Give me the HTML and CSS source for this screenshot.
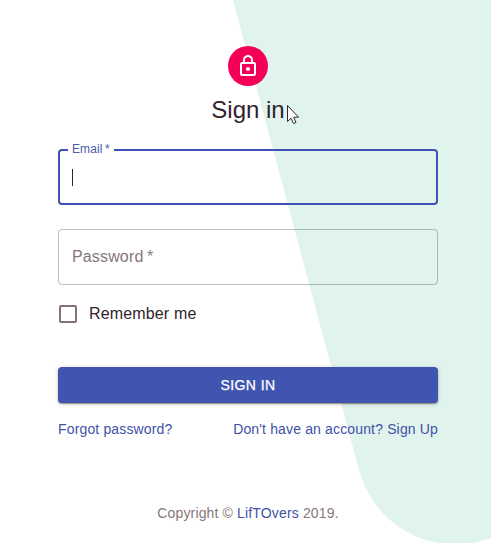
FILE: index.html
```html
<!DOCTYPE html>
<html lang="en">
<head>
<meta charset="utf-8">
<title>Sign in</title>
<link rel="stylesheet" href="styles.css">
</head>
<body>
<svg class="backdrop" width="491" height="543" viewBox="0 0 491 543" aria-hidden="true"><path fill="#e0f3ed" d="M233 0L359.200 470.800A100 100 0 0 0 479 541.800L491 538.300V0z"/></svg>
<main class="page">
  <div class="avatar">
    <svg width="24" height="24" viewBox="0 0 24 24" fill="#fff"><path d="M12 17c1.1 0 2-.9 2-2s-.9-2-2-2-2 .9-2 2 .9 2 2 2zm6-9h-1V6c0-2.760-2.240-5-5-5S7 3.240 7 6v2H6c-1.100 0-2 .9-2 2v10c0 1.100.9 2 2 2h12c1.100 0 2-.9 2-2V10c0-1.100-.9-2-2-2zM8.900 6c0-1.710 1.390-3.100 3.100-3.100s3.100 1.390 3.100 3.100v2H8.900V6zM18 20H6V10h12v10z"/></svg>
  </div>
  <h1 class="title">Sign in</h1>
  <form class="form">
    <fieldset class="field focused">
      <legend class="legend">Email<span class="star"> *</span></legend>
      <span class="caret"></span>
    </fieldset>
    <div class="field idle">Password<span class="star"> *</span></div>
    <label class="remember"><span class="box"></span>Remember me</label>
    <button class="submit" type="button">SIGN IN</button>
    <nav class="links"><a>Forgot password?</a><a>Don't have an account? Sign Up</a></nav>
  </form>
  <footer class="copyright">Copyright © <a>LifTOvers</a> 2019.</footer>
</main>
<svg class="cursor" width="14" height="22" viewBox="0 0 14 22" aria-hidden="true"><path d="M1.500 1.500V17.500L5 14.200L7.500 19.500L10 18.500L7.700 13.200H12.500z" fill="#fff" stroke="#30273a" stroke-width="1"/></svg>
</body>
</html>
```
FILE: styles.css
```css
* { box-sizing: border-box; }
body {
  margin: 0;
  width: 491px;
  height: 543px;
  overflow: hidden;
  background: #fff;
  color: #30232c;
  font-family: "Liberation Sans", Arial, sans-serif;
}
.backdrop { position: absolute; top: 0; left: 0; }
.page {
  position: relative;
  width: 380px;
  margin-left: 58px;
  padding-top: 46px;
  display: flex;
  flex-direction: column;
  align-items: center;
}
.avatar {
  width: 40px;
  height: 40px;
  border-radius: 50%;
  background: #f50057;
  display: flex;
  align-items: center;
  justify-content: center;
}
.title {
  margin: 8px 0 0;
  font-size: 24px;
  font-weight: 400;
  line-height: 32px;
}
.form {
  width: 100%;
  margin-top: 16px;
  display: flex;
  flex-direction: column;
}
.field {
  width: 100%;
  margin: 0;
  border-radius: 4px;
}
.focused {
  height: 63px;
  border: 2px solid #3f51b5;
  padding: 0 12px;
  min-width: 0;
}
.legend {
  height: 16px;
  margin-left: -4px;
  padding: 0 4px;
  color: #4a5aa8;
  font-size: 12px;
  line-height: 14px;
  letter-spacing: 0.11px;
}
.star { word-spacing: -1px; }
.caret {
  display: block;
  width: 1px;
  height: 17px;
  margin-top: 11px;
  background: #30232c;
}
.idle {
  height: 56px;
  margin-top: 24px;
  padding: 0 13px;
  border: 1px solid rgba(0, 0, 0, 0.25);
  line-height: 54px;
  font-size: 16px;
  letter-spacing: 0.15px;
  color: #857779;
}
.remember {
  height: 42px;
  margin-top: 8px;
  padding-left: 1px;
  display: flex;
  align-items: center;
  gap: 12px;
  font-size: 16px;
  letter-spacing: 0.15px;
}
.box {
  width: 18px;
  height: 18px;
  border: 2px solid #857373;
  border-radius: 2px;
}
.submit {
  height: 36px;
  margin-top: 32px;
  padding: 0;
  border: 0;
  border-radius: 4px;
  background: #3f55b0;
  color: #fff;
  font-family: inherit;
  font-size: 14px;
  letter-spacing: 0.4px;
  -webkit-text-stroke: 0.25px #fff;
  box-shadow: 0 1px 4px rgba(0, 0, 0, 0.2), 0 1px 1px rgba(50, 25, 0, 0.4);
}
.links {
  display: flex;
  justify-content: space-between;
  margin-top: 16px;
  font-size: 14px;
  line-height: 20px;
  letter-spacing: 0.15px;
  color: #3f51a8;
}
.copyright {
  margin-top: 64px;
  font-size: 14px;
  line-height: 20px;
  letter-spacing: 0.15px;
  color: #857779;
}
.copyright a { color: #3f51a8; }
.cursor { position: absolute; left: 286px; top: 104px; }
```
